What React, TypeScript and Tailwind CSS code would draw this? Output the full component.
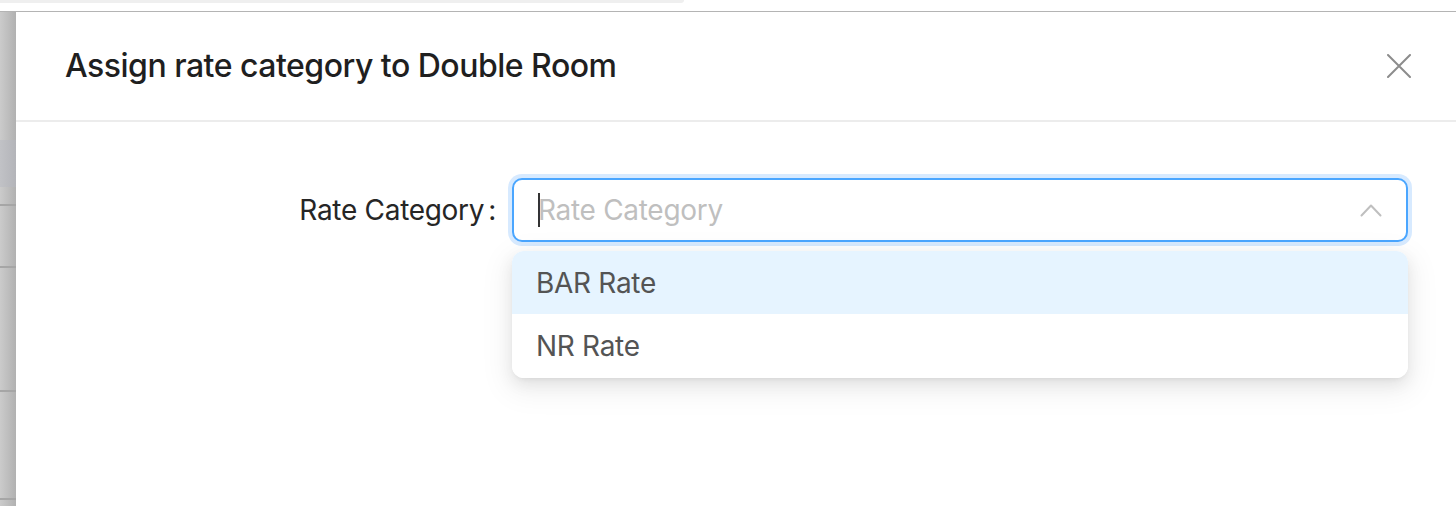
const options = ["BAR Rate", "NR Rate"];

function CloseIcon() {
  return (
    <svg width="24" height="24" viewBox="0 0 24 24" fill="none">
      <path d="M1 1L23 23M23 1L1 23" stroke="#8c8c8c" strokeWidth="2" strokeLinecap="round" />
    </svg>
  );
}

function ChevronUp() {
  return (
    <svg width="22" height="14" viewBox="0 0 22 14" fill="none">
      <path d="M1.5 12.5L11 2.5L20.5 12.5" stroke="#bfbfbf" strokeWidth="2" strokeLinecap="round" strokeLinejoin="round" />
    </svg>
  );
}

function BackdropStrip() {
  // the page beneath the modal, peeking out on the left
  return (
    <div className="w-4 flex flex-col bg-gradient-to-r from-[#cbcbcb] to-[#b1b1b1]">
      <div className="h-[128px]" />
      <div className="h-[47px] bg-gradient-to-r from-[#c1c2c6] to-[#b3b4b9]" />
      <div className="h-[17px]" />
      <div className="h-[2px] bg-[#a6a6a6]" />
      <div className="h-[60px]" />
      <div className="h-[2px] bg-[#a6a6a6]" />
      <div className="h-[122px]" />
      <div className="h-[2px] bg-[#a6a6a6]" />
      <div className="h-[106px]" />
      <div className="h-[2px] bg-[#a6a6a6]" />
      <div className="flex-1" />
    </div>
  );
}

export default function App() {
  return (
    <div className="h-[506px] w-[1456px] flex flex-col overflow-hidden bg-white font-['Inter','Liberation_Sans',sans-serif]">
      <div className="h-[11px]">
        <div className="h-[3px] w-[684px] rounded-br-full bg-[#efefef]" />
      </div>
      <div className="h-px bg-[#b4b4b4]" />

      <div className="flex flex-1">
        <BackdropStrip />

        <section className="flex-1 flex flex-col bg-white">
          <header className="h-[110px] flex items-center justify-between pl-[49px] pr-[45px] border-b-2 border-[#ececec]">
            <h2 className="text-[32px] font-medium text-[#1f1f1f] tracking-[-0.5px]">
              Assign rate category to Double Room
            </h2>
            <button className="w-6 h-6 flex items-center justify-center">
              <CloseIcon />
            </button>
          </header>

          <div className="pt-[56px] flex items-start tracking-[-0.3px]">
            <label className="w-[496px] h-16 flex items-center justify-end pr-[13px] text-[28px] text-[#262626]">
              Rate Category<span className="ml-[4px] mr-[3px]">:</span>
            </label>

            <div className="relative w-[896px]">
              <div className="h-16 flex items-center justify-between pl-6 pr-[24px] rounded-[10px] border-2 border-[#4aa6ff] shadow-[0_0_0_4px_#d7eaff] bg-white">
                <div className="flex items-center">
                  <span className="w-[2px] h-[34px] bg-[#333]" />
                  <span className="text-[28px] text-[#bfbfbf] -ml-[2px]">Rate Category</span>
                </div>
                <ChevronUp />
              </div>

              <ul className="absolute left-0 right-0 top-[73px] rounded-[12px] bg-white overflow-hidden shadow-[0_6px_16px_rgba(0,0,0,0.08),0_3px_6px_-4px_rgba(0,0,0,0.12),0_9px_28px_8px_rgba(0,0,0,0.05)]">
                {options.map((o, i) => (
                  <li
                    key={o}
                    className={
                      "flex items-center pl-6 text-[28px] text-[#545454] " +
                      (i === 0 ? "h-[63px] bg-[#e6f4ff]" : "h-[64px] bg-white")
                    }
                  >
                    {o}
                  </li>
                ))}
              </ul>
            </div>
          </div>
        </section>
      </div>
    </div>
  );
}
